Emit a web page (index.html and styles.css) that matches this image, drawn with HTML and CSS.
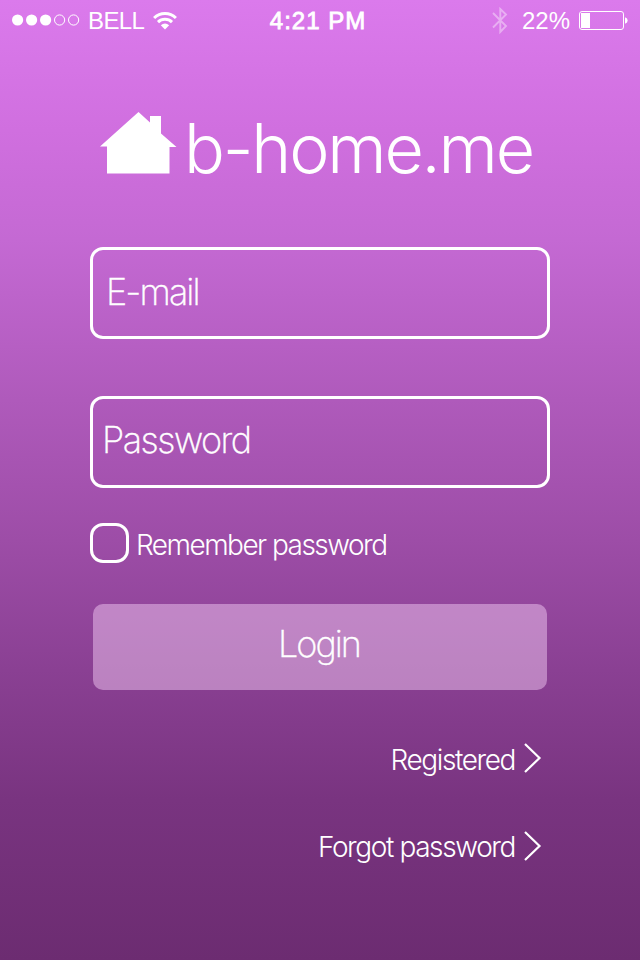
FILE: index.html
```html
<!DOCTYPE html>
<html lang="en">
<head>
<meta charset="utf-8">
<title>b-home.me</title>
<link rel="stylesheet" href="styles.css">
</head>
<body>
<header class="status">
  <div class="status-left">
    <svg class="signal" width="68" height="12" viewBox="0 0 68 12"><g fill="#fff"><circle cx="5.6" cy="6" r="5.6"/><circle cx="19.6" cy="6" r="5.6"/><circle cx="33.6" cy="6" r="5.6"/></g><g fill="none" stroke="#fff"><circle cx="47.6" cy="6" r="5.1"/><circle cx="61.6" cy="6" r="5.1"/></g></svg>
    <span class="carrier">BELL</span>
    <svg class="wifi" width="24" height="19" viewBox="0 0 24 19"><path fill="none" stroke="#fff" stroke-width="3" d="M1.1 7A15.5 15.5 0 0 1 22.9 7M5 11.1A10 10 0 0 1 19 11.1"/><path fill="#fff" d="M12 18.5 7.8 14.2Q12 10.8 16.2 14.2Z"/></svg>
  </div>
  <span class="clock">4:21 PM</span>
  <div class="status-right">
    <svg class="bluetooth" width="16" height="27" viewBox="0 0 16 27"><path fill="none" stroke="#fff" stroke-width="1.9" d="M1 6 14 19 8.3 25V2L14 7.5 1 20.5"/></svg>
    <span class="percent">22%</span>
    <svg class="battery" width="49" height="19" viewBox="0 0 49 19"><rect x=".5" y=".5" width="44" height="18" rx="2.5" fill="none" stroke="#fff"/><path fill="#fff" d="M2 2h9v15H2zM46 6.2q2.7 1 2.7 3.3T46 12.8z"/></svg>
  </div>
</header>
<main class="screen">
  <h1 class="brand">
    <svg class="house" width="78" height="62" viewBox="0 0 78 62"><path fill="#fff" d="M38.5 0 50 10.5V4h11v17.5L76.5 35H69.5v26.500H7V34.500H0Z"/></svg>
    <span>b-home.me</span>
  </h1>
  <form class="login">
    <label class="field field-email"><span>E-mail</span></label>
    <label class="field field-password"><span>Password</span></label>
    <label class="remember"><i class="box"></i><span>Remember password</span></label>
    <button class="submit" type="button"><span>Login</span></button>
  </form>
  <nav class="links">
    <a class="link"><span class="link-reg">Registered</span><svg width="18" height="30" viewBox="0 0 18 30"><path fill="none" stroke="#fff" stroke-width="2.2" d="M1 1 15.5 15 1 29"/></svg></a>
    <a class="link"><span class="link-forgot">Forgot password</span><svg width="18" height="30" viewBox="0 0 18 30"><path fill="none" stroke="#fff" stroke-width="2.2" d="M1 1 15.5 15 1 29"/></svg></a>
  </nav>
</main>
</body>
</html>
```
FILE: styles.css
```css
* { box-sizing: border-box; }
body {
  margin: 0;
  height: 960px;
  overflow: hidden;
  color: #fff;
  font-family: Inter, "Liberation Sans", sans-serif;
  font-weight: 300;
  background: linear-gradient(#db7aec 0, #d06fdf 130px, #c469d3 240px, #af5abb 400px, #9d4da7 540px, #8a4093 670px, #793480 800px, #6c2c71 960px);
}
svg { display: block; flex: none; }
.status {
  height: 40px;
  display: grid;
  grid-template-columns: 1fr auto 1fr;
  padding: 0 12px;
  font-family: "Liberation Sans", sans-serif;
  font-size: 24px;
  line-height: 42px;
  white-space: nowrap;
}
.status-left, .status-right { display: flex; }
.status-right { justify-content: flex-end; }
.signal { margin-top: 14px; }
.carrier { width: 57px; margin-left: 8px; letter-spacing: -.6px; }
.wifi { margin: 11px 0 0 8px; }
.clock { margin-right: 4px; font-weight: 400; letter-spacing: 1px; -webkit-text-stroke: .8px #fff; }
.bluetooth { margin-top: 7px; opacity: .4; }
.percent { margin: 0 9px 0 14px; }
.battery { margin-top: 11px; }
.screen { padding: 0 90px; }
.brand {
  display: flex;
  margin: 72px 0 0 10px;
  height: 75px;
  font-size: 68px;
  font-weight: 300;
  line-height: 72px;
  letter-spacing: -2.2px;
}
.brand span { margin-left: 6px; white-space: nowrap; }
.login { margin-top: 60px; }
.field {
  display: block;
  height: 92px;
  border: 3px solid #fff;
  border-radius: 13px;
  font-size: 36px;
  line-height: 85px;
  font-weight: 200;
  -webkit-text-stroke: .4px #fff;
}
.field-email { padding-left: 13px; letter-spacing: -1.9px; }
.field-password { margin-top: 57px; padding-left: 9px; line-height: 82px; letter-spacing: -1.5px; }
.remember {
  display: flex;
  margin-top: 35px;
  height: 40px;
  font-size: 28px;
  line-height: 45px;
  letter-spacing: -1.53px;
}
.box { flex: none; width: 39px; height: 40px; border: 3px solid #fff; border-radius: 13px; }
.remember span { margin-left: 7px; white-space: nowrap; }
.submit {
  display: block;
  width: 454px;
  height: 86px;
  margin: 41px 0 0 3px;
  padding: 0 2px 6px 0;
  border: 0;
  border-radius: 10px;
  background: rgba(255, 220, 255, .43);
  color: #fff;
  font: 200 36px/80px Inter, "Liberation Sans", sans-serif;
  letter-spacing: -2px;
  -webkit-text-stroke: .4px #fff;
}
.links { margin-top: 53px; padding-right: 8px; }
.link {
  display: flex;
  justify-content: flex-end;
  height: 30px;
  margin-bottom: 58px;
  gap: 9px;
  font-size: 28px;
  line-height: 35px;
  letter-spacing: -1.4px;
}
.link-forgot { line-height: 32px; }
```
